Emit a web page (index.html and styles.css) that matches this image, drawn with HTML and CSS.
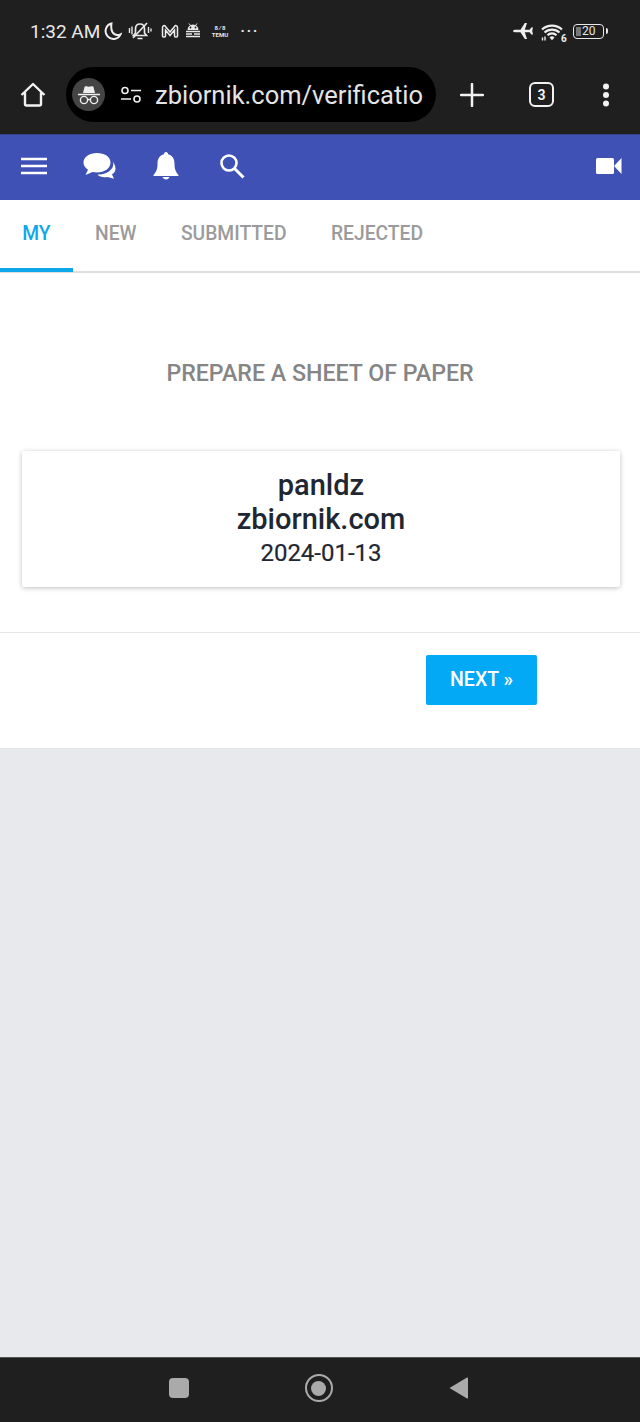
FILE: index.html
```html
<!DOCTYPE html>
<html lang="en">
<head>
    <meta charset="UTF-8">
    <meta name="viewport" content="width=device-width, initial-scale=1.0">
    <title>Verification</title>
    <link rel="stylesheet" href="styles.css">
</head>
<body>
    <div class="phone-top">
        <div class="status-bar">
            <span class="clock">1:32 AM</span>
            <svg class="moon" width="19" height="19" viewBox="0 0 18 18"><path d="M8 1.500a7.400 7.400 0 1 0 8.600 10.200c-1 .5-2 .7-3 .6C9.500 12 7 8.500 8 1.500z" fill="none" stroke="#eeeeee" stroke-width="1.900"/></svg>
            <svg class="status-icon" width="24" height="20" viewBox="0 0 24 20"><path d="M12 3c-3 0-4.500 2.200-4.500 5v4L5.500 14.500h13L16.500 12V8c0-2.800-1.500-5-4.500-5z" fill="none" stroke="#e8e8e8" stroke-width="1.700"/><path d="M5 17L19 2" stroke="#e8e8e8" stroke-width="1.700"/><path d="M9.500 17.500h5M1.500 7v5M4 5.500v8M20.500 6v6M23 7.500v3" stroke="#e8e8e8" stroke-width="1.400"/></svg>
            <svg class="status-icon status-icon-mail" width="18" height="14" viewBox="0 0 18 14"><path d="M1.500 12V3.500C1.500 1.500 3.500 1 4.500 2.500L9 8l4.500-5.500C14.500 1 16.500 1.500 16.500 3.500V12c0 .7-.5 1-1 1h-1c-.5 0-1-.3-1-1V6L9 11.500 4.500 6v6c0 .7-.5 1-1 1h-1c-.5 0-1-.3-1-1z" fill="none" stroke="#eeeeee" stroke-width="1.500"/></svg>
            <svg class="status-icon" width="16" height="16" viewBox="0 0 16 16"><path d="M2.500 7a5.500 5.500 0 0 1 11 0z" fill="#e8e8e8"/><circle cx="5.500" cy="4.500" r=".9" fill="#1f1f1f"/><circle cx="10.500" cy="4.500" r=".9" fill="#1f1f1f"/><path d="M1 8.500h14M1 11h6M9 11h6M1 13.500h14" stroke="#e8e8e8" stroke-width="1.400"/><path d="M4 .5l1.500 2M12 .5l-1.500 2" stroke="#e8e8e8"/></svg>
            <span class="temu"><span>8 &#8725; 8</span><span>TEMU</span></span>
            <span class="more-dots">&middot;&middot;&middot;</span>
            <span class="status-gap"></span>
            <svg class="plane" width="22" height="18" viewBox="0 0 22 18"><path d="M0 9c0-.8 1.500-1.300 3-1.300h4.500L11.800 1h2.200l-2.200 6.700h4.900l1.500-2.200h1.800l-.8 3.500.8 3.500H18.200l-1.500-2.200h-4.900L14 17h-2.200L7.500 10.300H3C1.500 10.300 0 9.800 0 9z" fill="#eeeeee"/></svg>
            <svg class="wifi" width="26" height="20" viewBox="0 0 26 20"><path d="M1 6.500a15 15 0 0 1 20 0M3.500 9.500a11 11 0 0 1 15 0M6.500 12.200a6.500 6.500 0 0 1 9 0" fill="none" stroke="#eeeeee" stroke-width="2.200"/><path d="M8.500 14.500a3.500 3.500 0 0 1 5 0l-2.500 2.800z" fill="#eeeeee"/><path d="M1.500 14.500v3M4 13.500v4" stroke="#eeeeee" stroke-width="1.400"/><text x="20" y="19" class="wifi-six">6</text></svg>
            <div class="battery"><span class="battery-level"></span><span class="battery-num">20</span></div>
            <span class="battery-tip"></span>
        </div>
        <div class="browser-bar">
            <svg class="home-icon" width="26" height="26" viewBox="0 0 26 26"><path d="M1.500 13L13 2l11.500 11M5 10.500V22c0 .8.500 1.500 1.500 1.500h13c1 0 1.500-.7 1.500-1.500V10.500" fill="none" stroke="#f2f2f2" stroke-width="2.400" stroke-linejoin="round"/></svg>
            <div class="url-pill">
                <span class="incognito">
                    <svg width="24" height="22" viewBox="0 0 24 22"><path d="M6 9l1.500-6c.2-.8 1-1 1.800-.7 1.800.6 3.600.6 5.400 0 .8-.3 1.600-.1 1.800.7L18 9z" fill="#eeeeee"/><path d="M1 10.500h22" stroke="#eeeeee" stroke-width="1.500"/><circle cx="7" cy="16" r="3.600" fill="none" stroke="#eeeeee" stroke-width="1.400"/><circle cx="17" cy="16" r="3.600" fill="none" stroke="#eeeeee" stroke-width="1.400"/><path d="M10.500 15.500h3" stroke="#eeeeee" stroke-width="1.300"/></svg>
                </span>
                <svg class="tune-icon" width="22" height="18" viewBox="0 0 22 18"><circle cx="5" cy="4.500" r="3" fill="none" stroke="#eeeeee" stroke-width="1.600"/><path d="M11 4.500h10M1 13h10" stroke="#eeeeee" stroke-width="1.600"/><circle cx="17" cy="13" r="3" fill="none" stroke="#eeeeee" stroke-width="1.600"/></svg>
                <span class="url-text">zbiornik.com/verificatio</span>
            </div>
            <svg class="plus-icon" width="24" height="24" viewBox="0 0 24 24"><path d="M12 1v22M1 12h22" stroke="#f2f2f2" stroke-width="2.500" stroke-linecap="round"/></svg>
            <span class="tab-count">3</span>
            <svg class="menu-dots" width="8" height="24" viewBox="0 0 8 24"><circle cx="4" cy="3.500" r="3" fill="#f2f2f2"/><circle cx="4" cy="12" r="3" fill="#f2f2f2"/><circle cx="4" cy="20.500" r="3" fill="#f2f2f2"/></svg>
        </div>
    </div>

    <div class="site-nav">
        <svg class="nav-icon nav-burger" width="26" height="18" viewBox="0 0 26 18"><path d="M0 2h26M0 9h26M0 16h26" stroke="#fff" stroke-width="2.600"/></svg>
        <svg class="nav-icon nav-chat" width="34" height="28" viewBox="0 0 34 28"><path d="M14 1C6.500 1 0.500 5 0.500 10.500c0 3 1.800 5.500 4.500 7.300L2.500 23l7-3c1.500.3 3 .5 4.500.5 7.500 0 13.500-4.300 13.500-10S21.500 1 14 1z" fill="#fff"/><path d="M29.500 9c.5 1 .8 2 .8 3 0 5.500-6 10-14 10.500-1 0-1.500.2-1.800.3 1.500 1.600 4 2.500 7 2.500 1 0 2 0 3-.3l6.500 1.800-2-4.300c2.200-1.500 3.500-3.500 3.500-5.800 0-3-1.600-5.600-3-7.700z" fill="#fff"/></svg>
        <svg class="nav-icon nav-bell" width="26" height="28" viewBox="0 0 26 28"><path d="M13 0c-1.300 0-2 1-2 2.200C6.500 3.200 4.500 7 4.500 11.500c0 5.500-1 8-4 11.500v1h25v-1c-3-3.500-4-6-4-11.500C21.500 7 19.500 3.200 15 2.200 15 1 14.300 0 13 0z" fill="#fff"/><path d="M9.500 25h7c-.5 1.500-2 2.500-3.500 2.500S10 26.500 9.500 25z" fill="#fff"/></svg>
        <svg class="nav-icon nav-search" width="26" height="26" viewBox="0 0 26 26"><circle cx="10" cy="10" r="7.500" fill="none" stroke="#fff" stroke-width="2.600"/><path d="M15.500 15.500L24.500 24.500" stroke="#fff" stroke-width="3"/></svg>
        <svg class="nav-icon nav-video" width="26" height="18" viewBox="0 0 26 18"><rect x="0" y="1" width="18" height="16" rx="1.500" fill="#fff"/><path d="M18.500 8.500L25.500 1v16L18.500 9.500z" fill="#fff"/></svg>
    </div>

    <div class="tabs">
        <a class="tab tab-active">MY</a>
        <a class="tab">NEW</a>
        <a class="tab">SUBMITTED</a>
        <a class="tab">REJECTED</a>
    </div>

    <div class="panel">
        <h2 class="panel-title">PREPARE A SHEET OF PAPER</h2>
        <div class="sheet">
            <p class="sheet-line">panldz</p>
            <p class="sheet-line">zbiornik.com</p>
            <p class="sheet-date">2024-01-13</p>
        </div>
        <div class="panel-footer">
            <button class="next-button">NEXT &raquo;</button>
        </div>
    </div>

    <div class="page-fill"></div>

    <div class="phone-nav">
        <span class="nav-square"></span>
        <span class="nav-circle"><span class="nav-circle-dot"></span></span>
        <svg width="22" height="24" viewBox="0 0 22 24"><path d="M1.500 12L19 1.500c.6-.3 1 0 1 .6v19.800c0 .6-.4.9-1 .6z" fill="#aaaaaa"/></svg>
    </div>
</body>
</html>
```

FILE: styles.css
```css
* {
    box-sizing: border-box;
}
body {
    margin: 0;
    height: 1422px;
    display: flex;
    flex-direction: column;
    overflow: hidden;
    font-family: Roboto, "Liberation Sans", sans-serif;
    background-color: #e8e9ed;
}
.phone-top {
    height: 134px;
    background-color: #1f1f1f;
}
.status-bar {
    height: 62px;
    padding: 0 32px 0 30px;
    display: flex;
    align-items: center;
    color: #e8e8e8;
}
.clock {
    font-size: 19px;
    width: 73px;
    white-space: nowrap;
}
.moon {
    margin-right: 6px;
}
.status-icon {
    margin-right: 9px;
}
.status-icon-mail {
    margin-right: 6px;
}
.temu {
    display: flex;
    flex-direction: column;
    font-size: 6px;
    font-weight: 700;
    line-height: 7px;
    width: 20px;
    text-align: center;
    white-space: nowrap;
}
.more-dots {
    margin-left: 10px;
    font-size: 20px;
    letter-spacing: 1px;
    line-height: 20px;
}
.status-gap {
    flex: 1;
}
.plane {
    margin-right: 6px;
}
.wifi {
    margin-right: 6px;
    margin-top: 3px;
}
.wifi-six {
    font-size: 10px;
    font-weight: 700;
    fill: #eeeeee;
    font-family: Roboto, sans-serif;
}
.battery {
    width: 31px;
    height: 15px;
    border: 1.500px solid #e8e8e8;
    border-radius: 4px;
    display: flex;
    align-items: center;
    padding-left: 2px;
}
.battery-level {
    width: 5px;
    height: 9px;
    background-color: #777777;
}
.battery-num {
    font-size: 12px;
    line-height: 12px;
    margin-left: 1px;
}
.battery-tip {
    width: 2px;
    height: 6px;
    margin-left: 2px;
    border-radius: 0 2px 2px 0;
    background-color: #e8e8e8;
}
.browser-bar {
    height: 72px;
    display: flex;
    align-items: center;
    padding: 0 0 7px 20px;
}
.url-pill {
    margin-left: 20px;
    width: 370px;
    height: 55px;
    border-radius: 28px;
    background-color: #000;
    display: flex;
    align-items: center;
    padding-left: 6px;
    overflow: hidden;
}
.incognito {
    width: 33px;
    height: 33px;
    border-radius: 50%;
    background-color: #444444;
    display: flex;
    align-items: center;
    justify-content: center;
    flex-shrink: 0;
}
.tune-icon {
    margin-left: 15px;
    flex-shrink: 0;
}
.url-text {
    margin-left: 13px;
    font-size: 25.500px;
    color: #e4e4e4;
    white-space: nowrap;
}
.plus-icon {
    margin-left: 24px;
}
.tab-count {
    margin-left: 45px;
    width: 25px;
    height: 25px;
    border: 2.500px solid #f2f2f2;
    border-radius: 6px;
    color: #f2f2f2;
    font-size: 14px;
    font-weight: 700;
    display: flex;
    align-items: center;
    justify-content: center;
}
.menu-dots {
    margin-left: 48px;
}
.site-nav {
    height: 66px;
    padding-bottom: 3px;
    background-color: #3f51b5;
    border-top: 1px solid #34438f;
    display: flex;
    align-items: center;
}
.nav-icon {
    flex-shrink: 0;
}
.nav-burger {
    margin-left: 21px;
}
.nav-chat {
    margin-left: 36px;
}
.nav-bell {
    margin-left: 36px;
}
.nav-search {
    margin-left: 40px;
    margin-right: auto;
}
.nav-video {
    margin-right: 18px;
}
.tabs {
    height: 73px;
    background-color: #fff;
    border-bottom: 2px solid #e0e0e0;
    display: flex;
}
.tab {
    height: 72px;
    padding: 0 22.200px;
    font-size: 19.300px;
    font-weight: 500;
    line-height: 67px;
    color: #9b9b9b;
}
.tab-active {
    color: #0ea8ea;
    border-bottom: 4px solid #0ea8ea;
}
.panel {
    height: 476px;
    background-color: #fff;
    border-bottom: 1px solid #e2e3e7;
    display: flex;
    flex-direction: column;
}
.panel-title {
    margin: 85px 0 0;
    height: 93px;
    font-size: 23.200px;
    font-weight: 500;
    line-height: 31px;
    text-align: center;
    color: #858585;
}
.sheet {
    margin: 0 20px 0 22px;
    height: 136px;
    padding-top: 17px;
    background-color: #fff;
    border-radius: 2px;
    box-shadow: 0 1px 5px rgba(0,0,0,0.25);
    text-align: center;
    color: #1f2733;
}
.sheet-line {
    margin: 0;
    font-size: 29px;
    font-weight: 500;
    line-height: 34px;
}
.sheet-date {
    margin: 0;
    font-size: 24px;
    font-weight: 400;
    line-height: 34px;
    -webkit-text-stroke: 0.2px #1f2733;
}
.panel-footer {
    margin-top: 45px;
    border-top: 1px solid #e6e6e6;
    padding: 22px 0 0 426px;
}
.next-button {
    width: 111px;
    height: 50px;
    border: none;
    border-radius: 2px;
    background-color: #03a9f4;
    color: #fff;
    font-family: Roboto, "Liberation Sans", sans-serif;
    font-size: 19.500px;
    font-weight: 500;
    padding: 0 0 2px;
}
.page-fill {
    flex: 1;
}
.phone-nav {
    height: 65px;
    background-color: #1f1f1f;
    border-top: 1px solid #555555;
    display: flex;
    align-items: center;
    padding: 0 170px 4px 169px;
    justify-content: space-between;
}
.nav-square {
    width: 20px;
    height: 20px;
    border-radius: 4px;
    background-color: #aaaaaa;
}
.nav-circle {
    width: 28px;
    height: 28px;
    border: 2.500px solid #aaaaaa;
    border-radius: 50%;
    display: flex;
    align-items: center;
    justify-content: center;
}
.nav-circle-dot {
    width: 15px;
    height: 15px;
    border-radius: 50%;
    background-color: #aaaaaa;
}
```
